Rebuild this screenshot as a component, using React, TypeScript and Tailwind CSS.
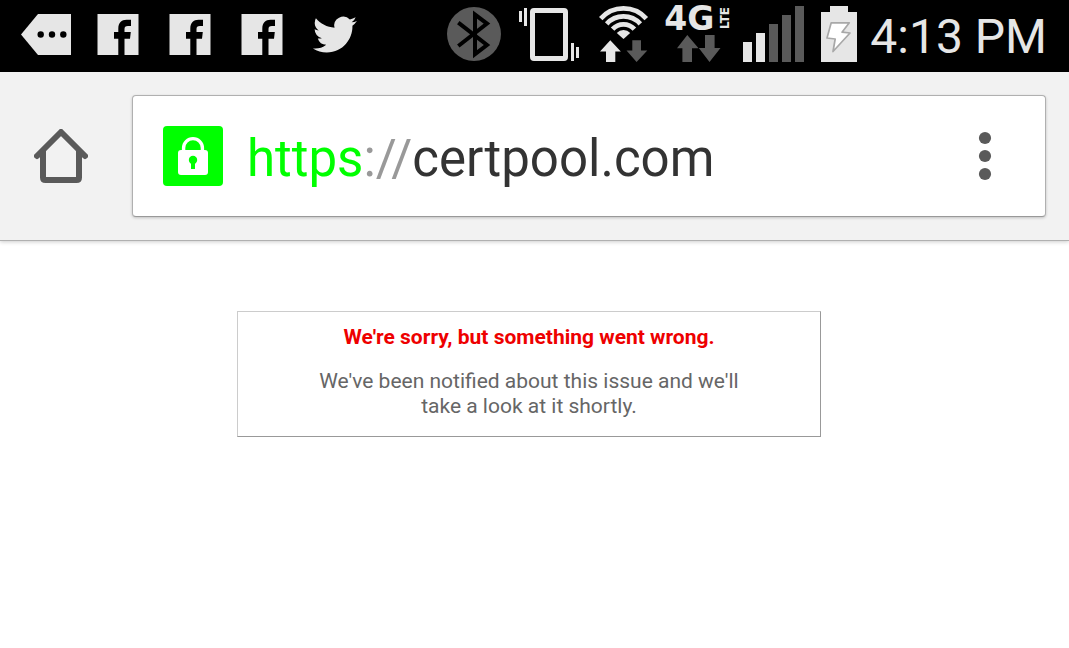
import React from 'react';

const FacebookIcon: React.FC = () => (
  <svg className="w-[42px] h-[42px]" viewBox="0 0 42 42" aria-label="Facebook notification">
    <path fill="#e6e6e6" d="M0.5 1H41.5V42H0.5Z" />
    <path fill="#000" d="M21.3 42V25.7H17V19H21.3V15.5C21.3 9.5 24.5 6.7 29.5 6.7H34V13H31C28.3 13 27.5 14 27.5 16V19H33.8L33 25.7H27.5V42Z" />
  </svg>
);

const MoreIcon: React.FC = () => (
  <svg className="w-[50px] h-[42px]" viewBox="21 13 50 42" aria-label="More notifications">
    <path fill="#e6e6e6" d="M21 34.5L38 14H71V55H38Z" />
    <circle cx="40.7" cy="34.5" r="3.2" />
    <circle cx="52" cy="34.5" r="3.2" />
    <circle cx="63.3" cy="34.5" r="3.2" />
  </svg>
);

const TwitterIcon: React.FC = () => (
  <svg className="w-11 h-11" viewBox="-0.5 -0.3 24 24" overflow="visible" aria-label="Twitter notification">
    <path fill="#e6e6e6" d="M23.953 4.57a10 10 0 01-2.825.775 4.958 4.958 0 002.163-2.723c-.951.555-2.005.959-3.127 1.184a4.92 4.92 0 00-8.384 4.482C7.69 8.095 4.067 6.13 1.64 3.162a4.822 4.822 0 00-.666 2.475c0 1.71.87 3.213 2.188 4.096a4.904 4.904 0 01-2.228-.616v.06a4.923 4.923 0 003.946 4.827 4.996 4.996 0 01-2.212.085 4.936 4.936 0 004.604 3.417 9.867 9.867 0 01-6.102 2.105c-.39 0-.779-.023-1.17-.067a13.995 13.995 0 007.557 2.209c9.053 0 13.998-7.496 13.998-13.985 0-.21 0-.42-.015-.63A9.935 9.935 0 0024 4.59z" />
  </svg>
);

const BluetoothIcon: React.FC = () => (
  <svg className="w-[60px] h-[58px]" viewBox="447 5 60 58" aria-label="Bluetooth">
    <circle cx="474" cy="34" r="27" fill="#5a5a5a" />
    <path fill="none" stroke="#000" strokeWidth="4" d="M458.3 22.6L487 45L475 54.2V14.6L487 23.6L458.3 46" />
  </svg>
);

const VibrateIcon: React.FC = () => (
  <svg className="w-[68px] h-[58px]" viewBox="519 5 68 58" aria-label="Vibrate">
    <rect x="532.5" y="10.5" width="33" height="48" rx="1.5" fill="none" stroke="#e6e6e6" strokeWidth="5" />
    <path fill="#e6e6e6" d="M519 11h3v11h-3zM524 8h3v18h-3zM571 43h3v18h-3zM576 47h3v11h-3z" />
  </svg>
);

const WifiIcon: React.FC = () => (
  <svg className="w-[53px] h-[58px]" viewBox="599 5 53 58" aria-label="Wi-Fi">
    <g fill="none" stroke="#e6e6e6" strokeWidth="4.8">
      <path d="M600.7 18.6A30.6 30.6 0 0 1 646.3 18.6" />
      <path d="M606.7 23.9A22.6 22.6 0 0 1 640.3 23.9" />
      <path d="M612.6 29.2A14.7 14.7 0 0 1 634.4 29.2" />
    </g>
    <path fill="#e6e6e6" d="M623.5 39L616.8 33A9 9 0 0 1 630.2 33Z" />
    <path fill="#e6e6e6" d="M610.3 40.3L620.8 51.6H615.3V62H606V51.6H600Z" />
    <path fill="#5a5a5a" d="M636.6 62L626.5 50.6H632.3V40.3H641V50.6H647.3Z" />
  </svg>
);

const MobileDataIcon: React.FC = () => (
  <div className="w-[67px] h-[58px] flex flex-col items-center justify-between text-[#e6e6e6] font-bold font-['DejaVu_Sans',sans-serif]">
    <div className="flex w-full justify-between h-7">
      <span className="text-[33px] leading-7">4G</span>
      <span className="h-6 text-[12px] leading-3 [writing-mode:vertical-rl] rotate-180">LTE</span>
    </div>
    <svg className="w-[47px] h-[28px]" viewBox="674 35 47 28" aria-hidden="true">
      <path fill="#5a5a5a" d="M687.3 35L698.5 48.3H692V62H682.4V48.3H677Z" />
      <path fill="#5a5a5a" d="M709.5 62L698.8 48H705V35H714.6V48H720.5Z" />
    </svg>
  </div>
);

const SignalIcon: React.FC = () => (
  <svg className="w-[66px] h-[58px]" viewBox="743 5 66 58" aria-label="Signal strength">
    <path fill="#e6e6e6" d="M743 42h9v20h-9zM756 33h9v29h-9z" />
    <path fill="#5a5a5a" d="M769 24h9v38h-9zM782 15h9v47h-9zM795 6h9v56h-9z" />
  </svg>
);

const BatteryIcon: React.FC = () => (
  <svg className="w-[39px] h-[58px]" viewBox="821 5 39 58" aria-label="Battery charging">
    <path fill="#e6e6e6" d="M830 6H848V12H857V62H821V12H830Z" />
    <path fill="#fff" stroke="#a8a8a8" strokeWidth="1.7" strokeLinejoin="round" d="M831.2 22.8H849.3L842 32.2L850 33L833 51.5L835.2 39L827 38Z" />
  </svg>
);

const StatusBar: React.FC = () => (
  <div className="h-[72px] bg-black flex items-center justify-between pl-[10px] pr-[22px]">
    <div className="flex items-center pb-1">
      <div className="w-[72px] flex justify-center"><MoreIcon /></div>
      <div className="w-[72px] flex justify-center"><FacebookIcon /></div>
      <div className="w-[72px] flex justify-center"><FacebookIcon /></div>
      <div className="w-[72px] flex justify-center"><FacebookIcon /></div>
      <div className="w-[72px] flex justify-center"><TwitterIcon /></div>
    </div>
    <div className="flex items-center">
      <div className="flex items-center gap-3 pb-1 pr-[10px]">
        <BluetoothIcon />
        <VibrateIcon />
        <WifiIcon />
        <MobileDataIcon />
        <SignalIcon />
        <BatteryIcon />
      </div>
      <time className="pt-px text-[48px] leading-[56px] text-[#e6e6e6] whitespace-nowrap">4:13 PM</time>
    </div>
  </div>
);

const Toolbar: React.FC = () => (
  <header className="flex items-center bg-[#f2f2f2] py-[23px] pl-[34px] pr-[23px] border-b border-[#b0b0b0] shadow-[0_1px_4px_rgba(0,0,0,0.2)]">
    <button type="button" aria-label="Home" className="mr-11 shrink-0">
      <svg className="w-[54px] h-[54px]" viewBox="34 129 54 54" fill="none" stroke="#5a5a5a" strokeWidth="6">
        <path strokeLinecap="round" strokeLinejoin="round" d="M37 156L61 132L85 156" />
        <path d="M43 150V177.5Q43 180 45.5 180H76.5Q79 180 79 177.5V150" />
      </svg>
    </button>
    <div className="flex-1 min-w-0 h-[122px] flex items-center bg-white border border-[#b0b0b0] border-b-[#999] rounded-[4px] shadow-[0_1px_3px_rgba(0,0,0,0.2)] pl-[30px] pr-[48px]">
      <div className="w-[60px] h-[60px] shrink-0 rounded-[4px] bg-[#00ff00]">
        <svg className="w-full h-full" viewBox="163 126 60 60" aria-label="Secure connection">
          <path fill="none" stroke="#fff" strokeWidth="3.4" d="M183.6 151V148A9.4 9.4 0 0 1 202.4 148V151" />
          <rect x="178" y="150" width="30" height="25" rx="3" fill="#fff" />
          <circle cx="193" cy="160" r="4.2" fill="#00ff00" />
          <path fill="#00ff00" d="M191 161h4v8h-4z" />
        </svg>
      </div>
      <div
        role="textbox"
        aria-label="Address"
        contentEditable
        suppressContentEditableWarning
        spellCheck={false}
        className="flex-1 min-w-0 ml-6 pt-[6px] text-[51px] leading-[60px] whitespace-nowrap text-[#333] outline-none"
      >
        <span className="text-[#00ff00]">https</span>
        <span className="text-[#999]">://</span>
        <span>certpool.com</span>
      </div>
      <button type="button" aria-label="Menu" className="px-1 shrink-0">
        <svg className="w-[16px] h-[50px]" viewBox="977 131 16 50" fill="#5a5a5a">
          <circle cx="985" cy="138" r="6.1" />
          <circle cx="985" cy="156" r="6.1" />
          <circle cx="985" cy="174" r="6.1" />
        </svg>
      </button>
    </div>
  </header>
);

const App: React.FC = () => {
  return (
    <div className="min-h-screen bg-white font-[Roboto,sans-serif]">
      <StatusBar />
      <Toolbar />
      <main className="flex justify-center pt-[70px] pr-[11px]">
        <div className="w-full max-w-[584px] px-20 pt-[13px] pb-[17px] border border-[#ccc] border-r-[#999] border-b-[#999] text-center text-[21px] leading-[25px]">
          <h1 className="font-bold text-[#ee0000]">We're sorry, but something went wrong.</h1>
          <p className="mt-[19px] text-[#666]">We've been notified about this issue and we'll take a look at it shortly.</p>
        </div>
      </main>
    </div>
  );
};

export default App;
